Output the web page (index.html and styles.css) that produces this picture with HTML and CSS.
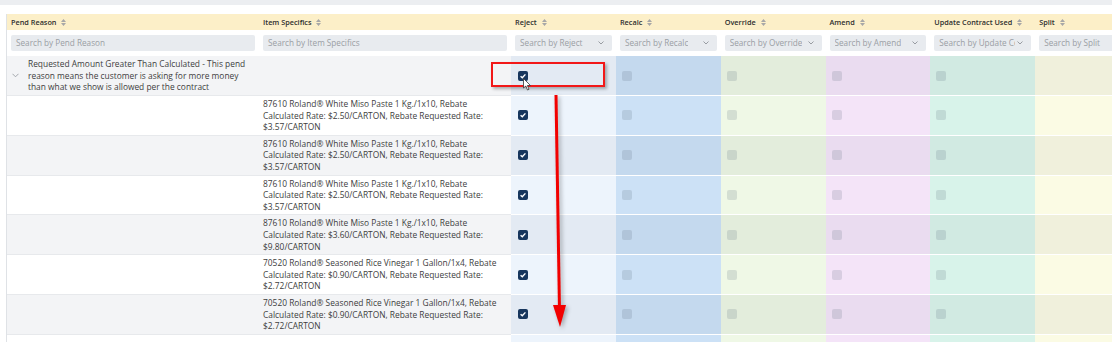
FILE: index.html
```html
<!DOCTYPE html>
<html lang="en">
<head>
    <meta charset="UTF-8">
    <title>Pend Review</title>
    <link rel="stylesheet" href="styles.css">
</head>
<body>
    <div class="topbar"></div>

    <div class="grid-wrap">
        <table class="grid">
            <colgroup>
                <col class="w-reason"><col class="w-item">
                <col class="w-act"><col class="w-act"><col class="w-act"><col class="w-act"><col class="w-act"><col class="w-act">
            </colgroup>
            <thead>
                <tr class="head">
                    <th>Pend Reason <svg class="sort" width="5" height="7" viewBox="0 0 5 7"><path d="M0 3 L2.5 0 L5 3Z M0 4 L2.5 7 L5 4Z"/></svg></th>
                    <th>Item Specifics <svg class="sort" width="5" height="7" viewBox="0 0 5 7"><path d="M0 3 L2.5 0 L5 3Z M0 4 L2.5 7 L5 4Z"/></svg></th>
                    <th>Reject <svg class="sort" width="5" height="7" viewBox="0 0 5 7"><path d="M0 3 L2.5 0 L5 3Z M0 4 L2.5 7 L5 4Z"/></svg></th>
                    <th>Recalc <svg class="sort" width="5" height="7" viewBox="0 0 5 7"><path d="M0 3 L2.5 0 L5 3Z M0 4 L2.5 7 L5 4Z"/></svg></th>
                    <th>Override <svg class="sort" width="5" height="7" viewBox="0 0 5 7"><path d="M0 3 L2.5 0 L5 3Z M0 4 L2.5 7 L5 4Z"/></svg></th>
                    <th>Amend <svg class="sort" width="5" height="7" viewBox="0 0 5 7"><path d="M0 3 L2.5 0 L5 3Z M0 4 L2.5 7 L5 4Z"/></svg></th>
                    <th>Update Contract Used <svg class="sort" width="5" height="7" viewBox="0 0 5 7"><path d="M0 3 L2.5 0 L5 3Z M0 4 L2.5 7 L5 4Z"/></svg></th>
                    <th>Split <svg class="sort" width="5" height="7" viewBox="0 0 5 7"><path d="M0 3 L2.5 0 L5 3Z M0 4 L2.5 7 L5 4Z"/></svg></th>
                </tr>
                <tr class="filters">
                    <td><div class="search">Search by Pend Reason</div></td>
                    <td><div class="search">Search by Item Specifics</div></td>
                    <td><div class="search select"><span>Search by Reject</span><svg width="6" height="4" viewBox="0 0 6 4"><polyline points="0.5,0.5 3,3 5.5,0.5"/></svg></div></td>
                    <td><div class="search select"><span>Search by Recalc</span><svg width="6" height="4" viewBox="0 0 6 4"><polyline points="0.5,0.5 3,3 5.5,0.5"/></svg></div></td>
                    <td><div class="search select"><span>Search by Override</span><svg width="6" height="4" viewBox="0 0 6 4"><polyline points="0.5,0.5 3,3 5.5,0.5"/></svg></div></td>
                    <td><div class="search select"><span>Search by Amend</span><svg width="6" height="4" viewBox="0 0 6 4"><polyline points="0.5,0.5 3,3 5.5,0.5"/></svg></div></td>
                    <td><div class="search select"><span>Search by Update Contract Used</span><svg width="6" height="4" viewBox="0 0 6 4"><polyline points="0.5,0.5 3,3 5.5,0.5"/></svg></div></td>
                    <td><div class="search">Search by Split</div></td>
                </tr>
            </thead>
            <tbody>
                <tr class="row grey group">
                    <td><div class="reason"><svg class="chev" width="7" height="5" viewBox="0 0 7 5"><polyline points="0.5,0.8 3.5,3.8 6.5,0.8"/></svg><span>Requested Amount Greater Than Calculated - This pend reason means the customer is asking for more money than what we show is allowed per the contract</span></div></td>
                    <td></td>
                    <td class="rej"><span class="cb on"><svg width="10" height="10" viewBox="0 0 10 10"><polyline points="2.6,5.2 4.3,6.8 7.4,3.4"/></svg></span></td>
                    <td class="rec"><span class="cb"></span></td>
                    <td class="ovr"><span class="cb"></span></td>
                    <td class="amd"><span class="cb"></span></td>
                    <td class="upd"><span class="cb"></span></td>
                    <td class="spl"></td>
                </tr>
                <tr class="row">
                    <td></td>
                    <td class="item">87610 Roland® White Miso Paste 1 Kg./1x10, Rebate Calculated Rate: $2.50/CARTON, Rebate Requested Rate: $3.57/CARTON</td>
                    <td class="rej"><span class="cb on"><svg width="10" height="10" viewBox="0 0 10 10"><polyline points="2.6,5.2 4.3,6.8 7.4,3.4"/></svg></span></td>
                    <td class="rec"><span class="cb"></span></td>
                    <td class="ovr"><span class="cb"></span></td>
                    <td class="amd"><span class="cb"></span></td>
                    <td class="upd"><span class="cb"></span></td>
                    <td class="spl"></td>
                </tr>
                <tr class="row grey">
                    <td></td>
                    <td class="item">87610 Roland® White Miso Paste 1 Kg./1x10, Rebate Calculated Rate: $2.50/CARTON, Rebate Requested Rate: $3.57/CARTON</td>
                    <td class="rej"><span class="cb on"><svg width="10" height="10" viewBox="0 0 10 10"><polyline points="2.6,5.2 4.3,6.8 7.4,3.4"/></svg></span></td>
                    <td class="rec"><span class="cb"></span></td>
                    <td class="ovr"><span class="cb"></span></td>
                    <td class="amd"><span class="cb"></span></td>
                    <td class="upd"><span class="cb"></span></td>
                    <td class="spl"></td>
                </tr>
                <tr class="row">
                    <td></td>
                    <td class="item">87610 Roland® White Miso Paste 1 Kg./1x10, Rebate Calculated Rate: $2.50/CARTON, Rebate Requested Rate: $3.57/CARTON</td>
                    <td class="rej"><span class="cb on"><svg width="10" height="10" viewBox="0 0 10 10"><polyline points="2.6,5.2 4.3,6.8 7.4,3.4"/></svg></span></td>
                    <td class="rec"><span class="cb"></span></td>
                    <td class="ovr"><span class="cb"></span></td>
                    <td class="amd"><span class="cb"></span></td>
                    <td class="upd"><span class="cb"></span></td>
                    <td class="spl"></td>
                </tr>
                <tr class="row grey">
                    <td></td>
                    <td class="item">87610 Roland® White Miso Paste 1 Kg./1x10, Rebate Calculated Rate: $3.60/CARTON, Rebate Requested Rate: $9.80/CARTON</td>
                    <td class="rej"><span class="cb on"><svg width="10" height="10" viewBox="0 0 10 10"><polyline points="2.6,5.2 4.3,6.8 7.4,3.4"/></svg></span></td>
                    <td class="rec"><span class="cb"></span></td>
                    <td class="ovr"><span class="cb"></span></td>
                    <td class="amd"><span class="cb"></span></td>
                    <td class="upd"><span class="cb"></span></td>
                    <td class="spl"></td>
                </tr>
                <tr class="row">
                    <td></td>
                    <td class="item">70520 Roland® Seasoned Rice Vinegar 1 Gallon/1x4, Rebate Calculated Rate: $0.90/CARTON, Rebate Requested Rate: $2.72/CARTON</td>
                    <td class="rej"><span class="cb on"><svg width="10" height="10" viewBox="0 0 10 10"><polyline points="2.6,5.2 4.3,6.8 7.4,3.4"/></svg></span></td>
                    <td class="rec"><span class="cb"></span></td>
                    <td class="ovr"><span class="cb"></span></td>
                    <td class="amd"><span class="cb"></span></td>
                    <td class="upd"><span class="cb"></span></td>
                    <td class="spl"></td>
                </tr>
                <tr class="row grey">
                    <td></td>
                    <td class="item">70520 Roland® Seasoned Rice Vinegar 1 Gallon/1x4, Rebate Calculated Rate: $0.90/CARTON, Rebate Requested Rate: $2.72/CARTON</td>
                    <td class="rej"><span class="cb on"><svg width="10" height="10" viewBox="0 0 10 10"><polyline points="2.6,5.2 4.3,6.8 7.4,3.4"/></svg></span></td>
                    <td class="rec"><span class="cb"></span></td>
                    <td class="ovr"><span class="cb"></span></td>
                    <td class="amd"><span class="cb"></span></td>
                    <td class="upd"><span class="cb"></span></td>
                    <td class="spl"></td>
                </tr>
                <tr class="row tail">
                    <td></td>
                    <td class="item"></td>
                    <td class="rej"></td>
                    <td class="rec"></td>
                    <td class="ovr"></td>
                    <td class="amd"></td>
                    <td class="upd"></td>
                    <td class="spl"></td>
                </tr>
            </tbody>
        </table>

        <!-- screenshot annotation: highlight box, cursor and drag arrow -->
        <div class="mark-box"></div>
        <svg class="cursor" width="9" height="13" viewBox="0 0 9 13"><path d="M0.5 0.5 L0.5 10 L2.8 8 L4.5 12 L6 11.3 L4.4 7.5 L7.5 7.5 Z"/></svg>
        <svg class="mark-arrow" width="20" height="240" viewBox="0 0 20 240"><line x1="6" y1="0" x2="9.5" y2="215"/><path d="M3 210 L16 210 L10 232 Z"/></svg>
    </div>
</body>
</html>
```

FILE: styles.css
```css
body {
    margin: 0;
    overflow: hidden;
    background: #fff;
    font-family: "Open Sans", "Noto Sans", sans-serif;
    color: #3d3d3d;
}

.topbar {
    height: 5px;
    background-color: #eceef1;
    margin-bottom: 9px;
}

.grid-wrap {
    position: relative;
    margin-left: 6px;
    border-left: 1px solid #dfe2e6;
}

.grid {
    border-collapse: collapse;
    table-layout: fixed;
    width: 1133px;
}

.w-reason { width: 252px; }
.w-item { width: 252px; }
.w-act { width: 104.8px; }

.head th {
    background-color: #fcefc8;
    height: 16px;
    padding: 0 4px;
    text-align: left;
    font-size: 7.3px;
    font-weight: 600;
    color: #2e2e2e;
    white-space: nowrap;
}

.sort {
    fill: #a7a7a7;
    margin-left: 3px;
    vertical-align: -1px;
}

.filters td {
    height: 26px;
    padding: 0 4px;
}

.search {
    height: 16px;
    background-color: #e8ebef;
    border-radius: 2px;
    padding: 0 5px;
    font-size: 8.2px;
    line-height: 16px;
    color: #9a9ea4;
    white-space: nowrap;
    overflow: hidden;
}

.select {
    display: flex;
    align-items: center;
    justify-content: space-between;
    gap: 2px;
}

.select span {
    overflow: hidden;
}

.select svg {
    flex: none;
    fill: none;
    stroke: #8f9399;
    stroke-width: 0.9;
    margin-right: 3px;
}

.row td {
    background-color: #fff;
    border-bottom: 1px solid #e7e9ec;
    padding: 2px 4px;
    vertical-align: middle;
    font-size: 8.4px;
    line-height: 11.6px;
}

.row.grey td {
    background-color: #f3f4f6;
}

.row .item {
    padding-right: 12px;
}

.group td,
.tail td {
    height: 35px;
}

.reason {
    display: flex;
    align-items: center;
}

.chev {
    flex: none;
    fill: none;
    stroke: #9a9ea4;
    stroke-width: 0.9;
    margin: 0 9px 0 1px;
}

.row .rej { background-color: #edf4fc; padding-left: 7px; border-bottom-color: #fff; }
.row .rec { background-color: #cce1f6; padding-left: 6px; border-bottom-color: #fff; }
.row .ovr { background-color: #eff8e6; padding-left: 6px; border-bottom-color: #fff; }
.row .amd { background-color: #f4e4f8; padding-left: 6px; border-bottom-color: #fff; }
.row .upd { background-color: #d8f3ea; padding-left: 6px; border-bottom-color: #fff; }
.row .spl { background-color: #fbfbe4; border-bottom-color: #fff; }

.row.grey .rej { background-color: #e3eaf3; }
.row.grey .rec { background-color: #c4d9ee; }
.row.grey .ovr { background-color: #e3eddc; }
.row.grey .amd { background-color: #eadcf0; }
.row.grey .upd { background-color: #d1eae2; }
.row.grey .spl { background-color: #f0f0dc; }

.cb {
    display: block;
    width: 10px;
    height: 10px;
    border-radius: 2px;
    background-color: rgba(80, 95, 115, 0.17);
}

.cb.on {
    background-color: #17365d;
}

.cb svg {
    display: block;
    fill: none;
    stroke: #fff;
    stroke-width: 1.4;
}

.mark-box {
    position: absolute;
    left: 484px;
    top: 48px;
    width: 110px;
    height: 21px;
    border: 2px solid #f21818;
    box-shadow: 2px 2px 3px rgba(0, 0, 0, 0.3);
}

.cursor {
    position: absolute;
    left: 516px;
    top: 64px;
    fill: #fff;
    stroke: #333;
    stroke-width: 0.8;
}

.mark-arrow {
    position: absolute;
    left: 543px;
    top: 81px;
    filter: drop-shadow(2px 2px 2px rgba(0, 0, 0, 0.3));
}

.mark-arrow line {
    stroke: #f20000;
    stroke-width: 3;
}

.mark-arrow path {
    fill: #f20000;
}
```
